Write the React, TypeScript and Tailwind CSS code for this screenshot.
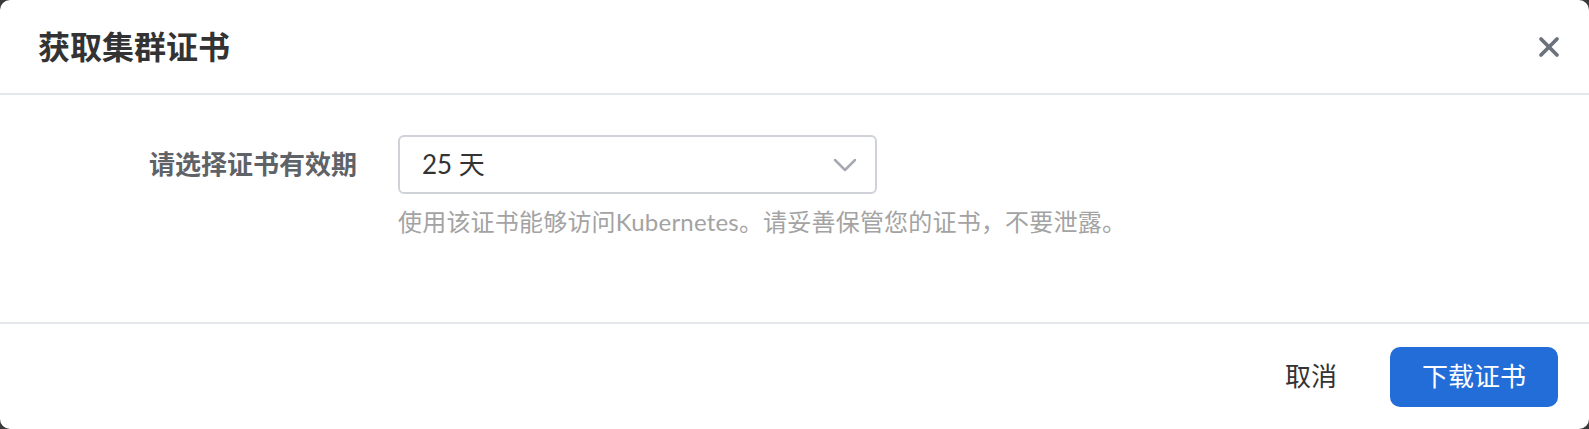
import { X, ChevronDown } from "lucide-react";

export default function App() {
  return (
    <div
      className="w-[1589px] h-[429px] bg-[#3a3a3a]"
      style={{ fontFamily: 'Lato, "Noto Sans CJK SC", sans-serif' }}
    >
      <div className="flex h-full flex-col overflow-hidden rounded-[10px] bg-white">
        {/* Header */}
        <div className="flex h-[95px] shrink-0 items-center justify-between border-b-2 border-[#e4e7eb] pl-[38px] pr-[24px]">
          <h2 className="text-[32px] font-bold leading-none text-[#333333]">获取集群证书</h2>
          <button type="button" className="text-[#6b727c]" aria-label="关闭">
            <X size={32} strokeWidth={2.8} />
          </button>
        </div>

        {/* Body */}
        <div className="flex flex-1 items-start pt-[40px]">
          <label className="flex h-[59px] w-[357px] shrink-0 items-center justify-end text-[26px] font-bold text-[#5f6368]">
            请选择证书有效期
          </label>
          <div className="ml-[41px] flex flex-col">
            <div className="flex h-[59px] w-[479px] items-center justify-between rounded-[6px] border-2 border-[#cfd2d8] pl-[22px] pr-[10px]">
              <span className="text-[26px] text-[#333333]">25 天</span>
              <ChevronDown size={40} strokeWidth={1.5} className="text-[#a6a9b0]" />
            </div>
            <p className="mt-[10px] text-[24px] leading-[36px] tracking-[0.2px] text-[#a3a3a3]">
              使用该证书能够访问Kubernetes。请妥善保管您的证书，不要泄露。
            </p>
          </div>
        </div>

        {/* Footer */}
        <div className="flex h-[107px] shrink-0 items-center justify-end gap-[53px] border-t-2 border-[#e4e7eb] pr-[31px]">
          <button type="button" className="text-[26px] text-[#333333]">取消</button>
          <button
            type="button"
            className="flex h-[60px] w-[168px] items-center justify-center rounded-[10px] bg-[#236dd9] text-[26px] text-white"
          >
            下载证书
          </button>
        </div>
      </div>
    </div>
  );
}
